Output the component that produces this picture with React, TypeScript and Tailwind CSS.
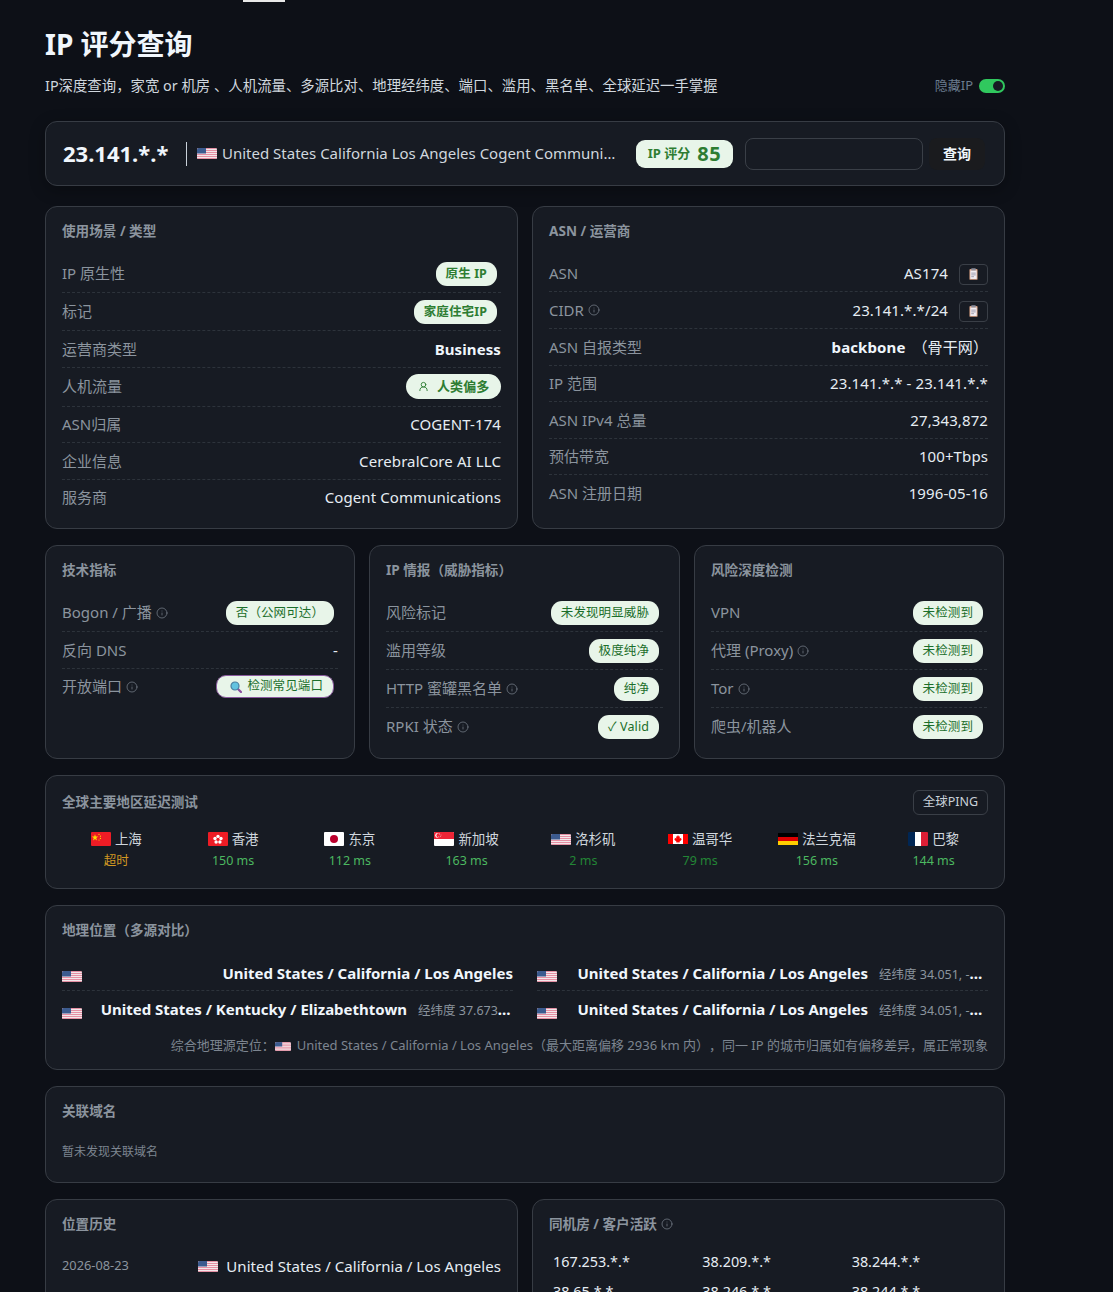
import React from "react";
import { Info, UserRound } from "lucide-react";

type FlagName = "us" | "cn" | "hk" | "jp" | "sg" | "ca" | "de" | "fr";

function Flag({ name, className = "" }: { name: FlagName; className?: string }) {
  if (name === "us") {
    return (
      <svg viewBox="0 0 20 11" className={"shrink-0 rounded-[1.5px] " + (className.includes("w-4") ? "" : "w-5 h-[11px] ") + className}>
        <rect width="20" height="11" fill="#f3e7ea" />
        {[0, 2, 4, 6, 8, 10].map((y) => (
          <rect key={y} y={y} width="20" height="1" fill="#e58fa3" />
        ))}
        <rect width="9" height="5.5" fill="#3c5b8f" />
      </svg>
    );
  }
  if (name === "cn") {
    return (
      <svg viewBox="0 0 20 14" className={"w-5 h-[14px] shrink-0 " + className}>
        <rect width="20" height="14" fill="#ee1c25" rx="1" />
        <polygon points="4,2.2 4.8,4.6 7.2,4.6 5.3,6 6,8.4 4,7 2,8.4 2.7,6 0.8,4.6 3.2,4.6" fill="#ffdd00" />
        <circle cx="8" cy="2.4" r="0.6" fill="#ffdd00" />
        <circle cx="9.4" cy="4.2" r="0.6" fill="#ffdd00" />
        <circle cx="9.4" cy="6.4" r="0.6" fill="#ffdd00" />
        <circle cx="8" cy="8" r="0.6" fill="#ffdd00" />
      </svg>
    );
  }
  if (name === "hk") {
    return (
      <svg viewBox="0 0 20 14" className={"w-5 h-[14px] shrink-0 " + className}>
        <rect width="20" height="14" fill="#ee1c25" rx="1" />
        <circle cx="10" cy="4.4" r="1.7" fill="#fff" />
        <circle cx="13" cy="6.5" r="1.7" fill="#fff" />
        <circle cx="11.9" cy="10" r="1.7" fill="#fff" />
        <circle cx="8.1" cy="10" r="1.7" fill="#fff" />
        <circle cx="7" cy="6.5" r="1.7" fill="#fff" />
        <circle cx="10" cy="7.6" r="1" fill="#ee1c25" />
      </svg>
    );
  }
  if (name === "jp") {
    return (
      <svg viewBox="0 0 20 14" className={"w-5 h-[14px] shrink-0 " + className}>
        <rect width="20" height="14" fill="#fff" rx="1" />
        <circle cx="10" cy="7" r="4" fill="#bc002d" />
      </svg>
    );
  }
  if (name === "sg") {
    return (
      <svg viewBox="0 0 20 14" className={"w-5 h-[14px] shrink-0 " + className}>
        <rect width="20" height="14" fill="#fff" rx="1" />
        <path d="M0 7V1a1 1 0 0 1 1-1h18a1 1 0 0 1 1 1v6z" fill="#ee2536" />
        <circle cx="3.6" cy="3.5" r="2.4" fill="#fff" />
        <circle cx="4.6" cy="3.5" r="2.2" fill="#ee2536" />
        <circle cx="5.6" cy="2" r="0.45" fill="#fff" />
        <circle cx="7" cy="3" r="0.45" fill="#fff" />
        <circle cx="6.4" cy="4.6" r="0.45" fill="#fff" />
        <circle cx="4.8" cy="4.6" r="0.45" fill="#fff" />
      </svg>
    );
  }
  if (name === "ca") {
    return (
      <svg viewBox="0 0 20 10" className={"w-5 h-[10px] shrink-0 " + className}>
        <rect width="20" height="10" fill="#fff" />
        <rect width="5" height="10" fill="#ff0000" />
        <rect x="15" width="5" height="10" fill="#ff0000" />
        <polygon
          points="10,1 11,2.8 12,2.3 11.6,4.6 13.4,3.8 13,5.2 14,5.6 11.6,7.4 11.8,8.4 10.2,8.2 10.2,9.4 9.8,9.4 9.8,8.2 8.2,8.4 8.4,7.4 6,5.6 7,5.2 6.6,3.8 8.4,4.6 8,2.3 9,2.8"
          fill="#ff0000"
        />
      </svg>
    );
  }
  if (name === "de") {
    return (
      <svg viewBox="0 0 20 12" className={"w-5 h-3 shrink-0 " + className}>
        <rect width="20" height="4" fill="#000" />
        <rect y="4" width="20" height="4" fill="#dd0000" />
        <rect y="8" width="20" height="4" fill="#ffce00" />
      </svg>
    );
  }
  return (
    <svg viewBox="0 0 20 14" className={"w-5 h-[14px] shrink-0 rounded-[1px] " + className}>
      <rect width="7" height="14" fill="#002654" />
      <rect x="7" width="6" height="14" fill="#fff" />
      <rect x="13" width="7" height="14" fill="#dd1e35" />
    </svg>
  );
}

function Clip() {
  return (
    <svg viewBox="0 0 10 13" className="w-[9px] h-3">
      <rect x="0.5" y="1" width="9" height="12" rx="1" fill="#d9a183" />
      <rect x="1.5" y="2.5" width="7" height="9.5" fill="#f1edf3" />
      <rect x="2.5" y="0" width="5" height="2.6" rx="0.6" fill="#8d8f9c" />
      <rect x="2.5" y="5" width="5" height="1" fill="#9a98a8" />
      <rect x="2.5" y="7" width="5" height="1" fill="#9a98a8" />
      <rect x="2.5" y="9" width="3" height="1" fill="#9a98a8" />
    </svg>
  );
}

function Copy() {
  return (
    <span className="flex items-center justify-center w-[29px] h-[21px] mt-[2px] rounded-[4px] border border-[#3a3f47] ml-[11px]">
      <Clip />
    </span>
  );
}

function Magnifier() {
  return (
    <svg viewBox="0 0 12 12" className="w-3 h-3 shrink-0">
      <line x1="7.5" y1="7.5" x2="11" y2="11" stroke="#8a4f9e" strokeWidth="2.2" strokeLinecap="round" />
      <circle cx="5" cy="5" r="4" fill="#62c3e0" stroke="#4a7fa0" strokeWidth="1.2" />
    </svg>
  );
}

function Tip() {
  return <Info size={12} strokeWidth={1.4} className="text-[#7d8590] inline-block ml-1 shrink-0" />;
}

function Pill({ children, bold = false }: { children: React.ReactNode; bold?: boolean }) {
  return (
    <span
      className={
        "inline-flex items-center mr-1 rounded-[11px] bg-[#e8f5e9] px-[10px] py-[2px] text-[12.5px] leading-[20px] whitespace-nowrap " +
        (bold ? "font-bold text-[#2e7d32]" : "text-[#1b6e2a]")
      }
    >
      {children}
    </span>
  );
}

function Row({ label, tip, children, last }: { label: string; tip?: boolean; children: React.ReactNode; last?: boolean }) {
  return (
    <div
      className={
        "flex items-center justify-between py-[6.5px] text-[15px] leading-[22.5px] " +
        (last ? "" : "border-b border-dashed border-[#2d333b]")
      }
    >
      <span className="flex items-center text-[#8b949e] whitespace-nowrap">
        {label}
        {tip && <Tip />}
      </span>
      <span className="flex items-center tracking-[0.1px] text-[#e6edf3] whitespace-nowrap">{children}</span>
    </div>
  );
}

function Card({ title, tip, children }: { title: string; tip?: boolean; children: React.ReactNode }) {
  return (
    <section className="rounded-xl border border-[#373c44] bg-[#171b23] px-4 pt-[14px] pb-[13px]">
      <h3 className="flex items-center h-5 mb-[14px] text-[13.6px] font-bold text-[#8b949e]">
        {title}
        {tip && <Tip />}
      </h3>
      {children}
    </section>
  );
}

const latency: { f: FlagName; n: string; v: string; c: string }[] = [
  { f: "cn", n: "上海", v: "超时", c: "text-[#d29922]" },
  { f: "hk", n: "香港", v: "150 ms", c: "text-[#4cb860]" },
  { f: "jp", n: "东京", v: "112 ms", c: "text-[#4cb860]" },
  { f: "sg", n: "新加坡", v: "163 ms", c: "text-[#4cb860]" },
  { f: "us", n: "洛杉矶", v: "2 ms", c: "text-[#238636]" },
  { f: "ca", n: "温哥华", v: "79 ms", c: "text-[#238636]" },
  { f: "de", n: "法兰克福", v: "156 ms", c: "text-[#4cb860]" },
  { f: "fr", n: "巴黎", v: "144 ms", c: "text-[#4cb860]" },
];

function GeoRow({ name, coord, coordWidth = "w-[105px]", last }: { name: string; coord?: string; coordWidth?: string; last?: boolean }) {
  return (
    <div className={"flex items-center justify-between h-9 " + (last ? "" : "border-b border-dashed border-[#2d333b]")}>
      <Flag name="us" className="mt-2" />
      <span className={"flex items-center min-w-0 text-[15px] font-bold text-[#f0f6fc] " + (last ? "" : "pt-[2px]")}>
        <span className="whitespace-nowrap">{name}</span>
        {coord && (
          <span className={"block ml-[11px] truncate " + coordWidth + (coordWidth === "w-[105px]" ? " mr-1" : " mr-[2px]")}>
            <span className="text-[12.5px] font-normal text-[#8b949e]">{coord}</span>
          </span>
        )}
      </span>
    </div>
  );
}

const nearby = ["167.253.*.*", "38.209.*.*", "38.244.*.*", "38.65.*.*", "38.246.*.*", "38.244.*.*"];

export default function App() {
  return (
    <div
      className="h-[1292px] overflow-hidden bg-[#0d1017] text-[#e6edf3]"
      style={{ fontFamily: '"Noto Sans", "Noto Sans CJK SC", sans-serif' }}
    >
      <div className="ml-[243px] w-[42px] h-[2px] bg-[#e8e8e8]" />
      <main className="w-[960px] ml-[45px]">
        <h1 className="mt-[22px] text-[28px] leading-[40px] font-bold text-[#f0f6fc]">IP 评分查询</h1>
        <div className="flex items-center justify-between mt-[12px] h-5">
          <p className="text-[14.4px] text-[#d0d7de]">IP深度查询，家宽 or 机房 、人机流量、多源比对、地理经纬度、端口、滥用、黑名单、全球延迟一手掌握</p>
          <div className="flex items-center gap-[6px]">
            <span className="text-[13px] text-[#6b7c8f]">隐藏IP</span>
            <span className="flex items-center justify-end w-[26px] h-[14px] rounded-full bg-[#30c85e] pr-[2px]">
              <span className="w-[10px] h-[10px] rounded-full bg-[#171b23]" />
            </span>
          </div>
        </div>

        <section className="flex items-center h-[65px] mt-[25px] rounded-xl border border-[#373c44] bg-[#171b23] pl-[17px] pr-[19px] shadow-[0_4px_16px_rgba(0,0,0,0.3)]">
          <span className="w-[105px] shrink-0 text-[22px] font-bold text-[#f0f6fc] whitespace-nowrap">23.141.*.*</span>
          <span className="w-px h-6 bg-[#c9d1d9] ml-[18px] mr-[10px] shrink-0" />
          <Flag name="us" className="mr-[5px]" />
          <span className="w-[396px] shrink-0 truncate text-[15px] text-[#d0d7de]">United States California Los Angeles Cogent Communications</span>
          <span className="flex items-center justify-center gap-[7px] w-[97px] h-7 ml-[18px] rounded-[9px] bg-[#e8f5e9] font-bold text-[#2e7d32] shrink-0">
            <span className="text-[13px]">IP 评分</span>
            <span className="text-[20px] tracking-[0.5px]">85</span>
          </span>
          <span className="w-[178px] h-8 ml-3 rounded-lg border border-[#3a3f47] shrink-0" />
          <span className="flex items-center justify-center w-14 h-8 ml-[6px] rounded-lg bg-[#1a1b1e] text-[14px] font-bold text-[#f0f6fc] shrink-0">查询</span>
        </section>

        <div className="grid grid-cols-2 gap-[14px] mt-5">
          <Card title="使用场景 / 类型">
            <Row label="IP 原生性"><Pill bold>原生 IP</Pill></Row>
            <Row label="标记"><Pill bold>家庭住宅IP</Pill></Row>
            <Row label="运营商类型"><span className="font-bold text-[#f0f6fc]">Business</span></Row>
            <Row label="人机流量">
              <span className="inline-flex items-center h-[25px] w-[95px] pl-3 rounded-full bg-[#e8f5e9] text-[13px] font-bold text-[#2e7d32]">
                <UserRound size={11} strokeWidth={2} className="mr-2" />
                人类偏多
              </span>
            </Row>
            <Row label="ASN归属">COGENT-174</Row>
            <Row label="企业信息">CerebralCore AI LLC</Row>
            <Row label="服务商" last>Cogent Communications</Row>
          </Card>
          <Card title="ASN / 运营商">
            <Row label="ASN">AS174<Copy /></Row>
            <Row label="CIDR" tip>23.141.*.*/24<Copy /></Row>
            <Row label="ASN 自报类型"><span className="font-bold text-[#f0f6fc]">backbone</span><span className="ml-[7px]">（骨干网）</span></Row>
            <Row label="IP 范围">23.141.*.* - 23.141.*.*</Row>
            <Row label="ASN IPv4 总量">27,343,872</Row>
            <Row label="预估带宽">100+Tbps</Row>
            <Row label="ASN 注册日期" last>1996-05-16</Row>
          </Card>
        </div>

        <div className="grid grid-cols-[310px_311px_310px] gap-[14px] mt-4">
          <Card title="技术指标">
            <Row label="Bogon / 广播" tip><Pill>否（公网可达）</Pill></Row>
            <Row label="反向 DNS">-</Row>
            <Row label="开放端口" tip last>
              <span className="inline-flex items-center gap-[5px] h-[23px] mr-1 pl-[13px] pr-[10px] rounded-[10px] bg-[#e8f5e9] border border-[#8a5a9e] text-[12.5px] text-[#1b6e2a]">
                <Magnifier />
                检测常见端口
              </span>
            </Row>
          </Card>
          <Card title="IP 情报（威胁指标）">
            <Row label="风险标记"><Pill>未发现明显威胁</Pill></Row>
            <Row label="滥用等级"><Pill>极度纯净</Pill></Row>
            <Row label="HTTP 蜜罐黑名单" tip><Pill>纯净</Pill></Row>
            <Row label="RPKI 状态" tip last><Pill>✓ Valid</Pill></Row>
          </Card>
          <Card title="风险深度检测">
            <Row label="VPN"><Pill>未检测到</Pill></Row>
            <Row label="代理 (Proxy)" tip><Pill>未检测到</Pill></Row>
            <Row label="Tor" tip><Pill>未检测到</Pill></Row>
            <Row label="爬虫/机器人" last><Pill>未检测到</Pill></Row>
          </Card>
        </div>

        <section className="mt-4 h-[114px] rounded-xl border border-[#373c44] bg-[#171b23] px-4 pt-[14px]">
          <div className="flex items-center justify-between h-[25px]">
            <h3 className="text-[13.6px] font-bold text-[#8b949e]">全球主要地区延迟测试</h3>
            <span className="flex items-center justify-center w-[75px] h-[25px] rounded-md border border-[#3a3f47] text-[12.5px] text-[#c9d1d9]">全球PING</span>
          </div>
          <div className="grid grid-cols-8 gap-2 mt-[14px]">
            {latency.map((l) => (
              <div key={l.n} className="flex flex-col items-center">
                <div className="flex items-center gap-1 h-5 text-[13.5px] text-[#d0d7de]">
                  <Flag name={l.f} />
                  <span>{l.n}</span>
                </div>
                <div className={"mt-[3px] text-[12.5px] leading-[18px] " + l.c}>{l.v}</div>
              </div>
            ))}
          </div>
        </section>

        <section className="mt-4 h-[165px] rounded-xl border border-[#373c44] bg-[#171b23] px-4 pt-[14px]">
          <h3 className="flex items-center h-5 mb-[15px] text-[13.6px] font-bold text-[#8b949e]">地理位置（多源对比）</h3>
          <div className="grid grid-cols-2 gap-x-6">
            <div>
              <GeoRow name="United States / California / Los Angeles" />
              <GeoRow name="United States / Kentucky / Elizabethtown" coord="经纬度 37.673, -85.859" coordWidth="w-[93px]" last />
            </div>
            <div>
              <GeoRow name="United States / California / Los Angeles" coord="经纬度 34.051, -118.244" />
              <GeoRow name="United States / California / Los Angeles" coord="经纬度 34.051, -118.244" last />
            </div>
          </div>
          <p className="flex items-center justify-end h-5 mt-[9px] text-[13px] text-[#7d8590] whitespace-nowrap [text-spacing-trim:space-all]">
            综合地理源定位：
            <Flag name="us" className="w-4 h-[9px] mr-[6px]" />
            United States / California / Los Angeles（最大距离偏移 2936 km 内），同一 IP 的城市归属如有偏移差异，属正常现象
          </p>
        </section>

        <section className="mt-4 h-[97px] rounded-xl border border-[#373c44] bg-[#171b23] px-4 pt-[14px]">
          <h3 className="flex items-center h-5 text-[13.6px] font-bold text-[#8b949e]">关联域名</h3>
          <p className="mt-[21px] text-[12px] leading-[19px] text-[#7d8590]">暂未发现关联域名</p>
        </section>

        <div className="grid grid-cols-2 gap-[14px] mt-4 h-[200px]">
          <section className="rounded-xl border border-[#373c44] bg-[#171b23] px-4 pt-[14px]">
            <h3 className="flex items-center h-5 text-[13.6px] font-bold text-[#8b949e]">位置历史</h3>
            <div className="flex items-center justify-between mt-[21px] h-[22px]">
              <span className="text-[12.8px] text-[#8b949e]">2026-08-23</span>
              <span className="flex items-center gap-2 text-[15px] tracking-[0.05px] text-[#e6edf3]">
                <Flag name="us" />
                United States / California / Los Angeles
              </span>
            </div>
          </section>
          <section className="rounded-xl border border-[#373c44] bg-[#171b23] px-4 pt-[14px]">
            <h3 className="flex items-center h-5 text-[13.6px] font-bold text-[#8b949e]">
              同机房 / 客户活跃
              <Tip />
            </h3>
            <div className="grid grid-cols-3 w-[448px] mt-[17px] ml-1 text-[14.4px] leading-[22px] gap-y-2 text-[#e6edf3]">
              {nearby.map((ip, i) => (
                <span key={i}>{ip}</span>
              ))}
            </div>
          </section>
        </div>
      </main>
    </div>
  );
}
